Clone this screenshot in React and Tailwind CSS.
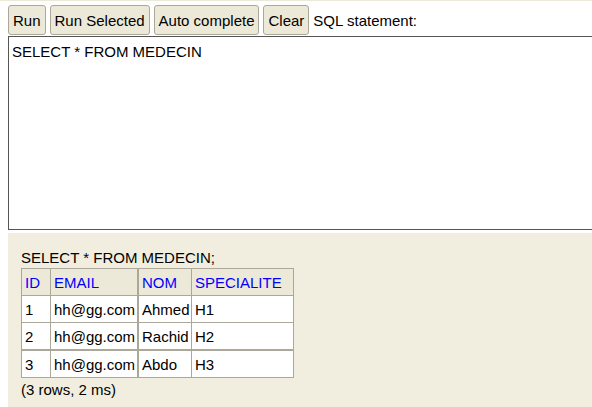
export default function App() {
  const rows = [
    ["1", "hh@gg.com", "Ahmed", "H1"],
    ["2", "hh@gg.com", "Rachid", "H2"],
    ["3", "hh@gg.com", "Abdo", "H3"],
  ];
  const btn =
    "h-[30px] px-[4px] bg-[#ece9d8] border border-[#aca899] rounded-[3px] text-black text-[15px] leading-[17px] whitespace-nowrap";
  return (
    <div
      className="w-[592px] h-[407px] bg-white overflow-hidden text-black text-[15px] leading-[17px]"
      style={{ fontFamily: '"Liberation Sans", Arial, sans-serif' }}
    >
      <div className="h-px bg-[#ece9d8]" />
      <div className="flex items-center gap-[4px] pl-[8px] pt-[4px]">
        <button className={btn}>Run</button>
        <button className={btn}>Run Selected</button>
        <button className={btn}>Auto complete</button>
        <button className={btn}>Clear</button>
        <span className="whitespace-nowrap">SQL statement:</span>
      </div>
      <div className="ml-[8px] mt-px w-[620px] h-[194px] border border-[#555555] pl-[3px] pt-[6px] whitespace-nowrap">
        SELECT * FROM MEDECIN
      </div>
      <div className="ml-[8px] mt-[3px] h-[180px] bg-[#f1eedf] pl-[13px] pt-[16px]">
        <div className="whitespace-nowrap">SELECT * FROM MEDECIN;</div>
        <table className="mt-[2px] table-fixed border-separate border-spacing-0 border-l border-t border-[#aca899] w-[273px]">
          <colgroup>
            <col className="w-[29px]" />
            <col className="w-[88px]" />
            <col className="w-[53px]" />
            <col className="w-[102px]" />
          </colgroup>
          <thead>
            <tr>
              {["ID", "EMAIL", "NOM", "SPECIALITE"].map((h, i) => (
                <th
                  key={h}
                  className={`h-[27px] p-0 pl-[3px] text-left font-normal align-middle bg-[#ece9d8] text-[#0000ff] border-b border-[#aca899] whitespace-nowrap ${
                    i === 1 ? "border-r-2" : "border-r"
                  }`}
                >
                  {h}
                </th>
              ))}
            </tr>
          </thead>
          <tbody>
            {rows.map((r, ri) => (
              <tr key={ri}>
                {r.map((c, i) => (
                  <td
                    key={i}
                    className={`p-0 pl-[3px] align-middle bg-white border-[#aca899] whitespace-nowrap ${
                      i === 1 ? "border-r-2" : "border-r"
                    } ${ri === 1 ? "border-b-2 h-[28px]" : "border-b h-[27px]"}`}
                  >
                    {c}
                  </td>
                ))}
              </tr>
            ))}
          </tbody>
        </table>
        <div className="mt-[3px] whitespace-nowrap">(3 rows, 2 ms)</div>
      </div>
    </div>
  );
}
